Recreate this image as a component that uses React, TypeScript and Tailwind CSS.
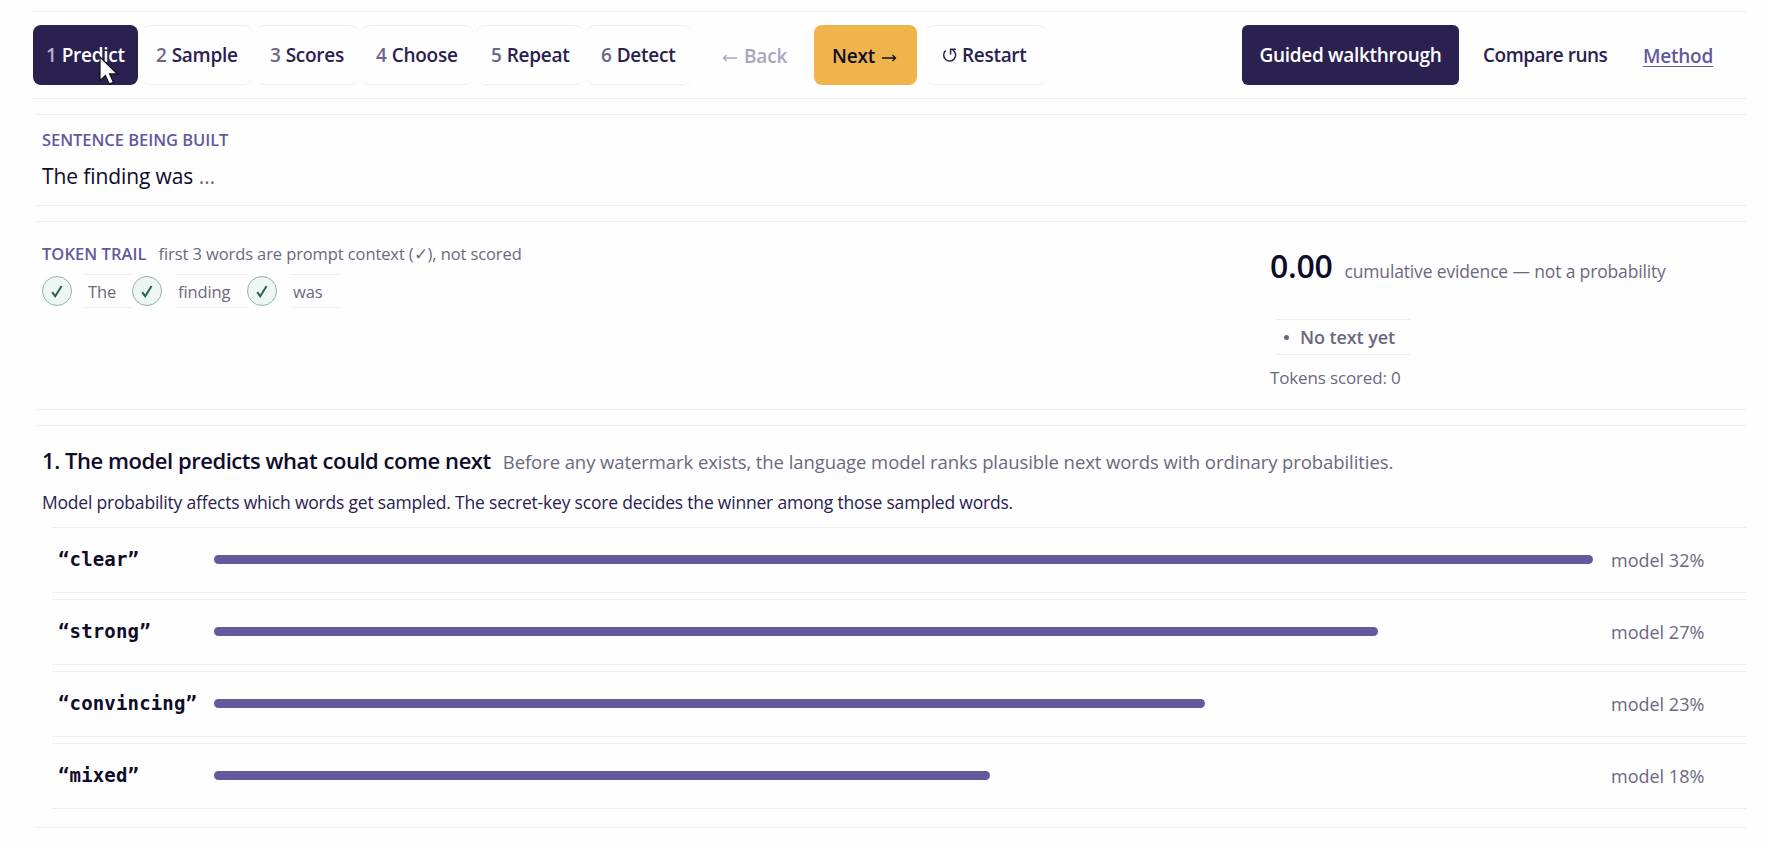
import React, { useState } from 'react';
import clsx from 'clsx';

const steps = [
  { label: 'Predict', width: 'w-[105px]' },
  { label: 'Sample', width: 'w-[110px]' },
  { label: 'Scores', width: 'w-[102px]' },
  { label: 'Choose', width: 'w-[111px]' },
  { label: 'Repeat', width: 'w-[106px]' },
  { label: 'Detect', width: 'w-[104px]' },
];

const trail = [
  { word: 'The', width: 'w-[47px]' },
  { word: 'finding', width: 'w-[72px]' },
  { word: 'was', width: 'w-[49px]' },
];

const candidates = [
  { word: 'clear', probability: 32 },
  { word: 'strong', probability: 27 },
  { word: 'convincing', probability: 23 },
  { word: 'mixed', probability: 18 },
];

const Cursor: React.FC = () => (
  <svg className="absolute left-[99px] top-[56px] z-10" width="20" height="29" viewBox="0 0 20 29">
    <path
      d="M1 1v23.5l5.4-5 3.9 8.5 4.1-1.8-3.8-8.3h7.6z"
      fill="#fff"
      stroke="#111"
      strokeWidth="1.2"
    />
  </svg>
);

const Arrow: React.FC<{ className?: string }> = ({ className }) => (
  <svg className={className} width="15" height="8" viewBox="0 0 15 8" fill="none" stroke="currentColor" strokeWidth="1.3">
    <path d="M0 4h13.5M10.5 1l3 3-3 3" />
  </svg>
);

const RestartIcon: React.FC = () => (
  <svg width="15" height="15" viewBox="0 0 15 15" fill="none" stroke="currentColor" strokeWidth="1.5">
    <path d="M3.6 2.6a6 6 0 1 0 7-.8M8.6 6.4V1.3h5.2" />
  </svg>
);

const Check: React.FC = () => (
  <svg width="12" height="13" viewBox="0 0 12 13" fill="none" stroke="currentColor" strokeWidth="2">
    <path d="M1.2 7.2l3 4L10.6 1" />
  </svg>
);

const App: React.FC = () => {
  const [activeStep, setActiveStep] = useState(0);
  const topProbability = candidates[0].probability;

  return (
    <div className="relative h-[848px] w-[1768px] overflow-hidden bg-[#fefefe] pt-[11px] font-['Open_Sans',sans-serif] text-[#0f0b2a]">
      <Cursor />

      {/* Toolbar */}
      <header className="ml-[33px] mr-[22px] flex h-[88px] items-start border-y border-[#eee] pt-[13px] text-[19px] font-semibold text-[#2a2150]">
        <nav className="flex gap-1">
          {steps.map((step, i) => (
            <button
              key={step.label}
              onClick={() => setActiveStep(i)}
              className={clsx(
                'flex h-[60px] items-center gap-[5px] whitespace-nowrap rounded-lg tracking-[-0.25px]',
                step.width,
                activeStep === i ? 'bg-[#2a2150] pl-[13px] text-white' : 'border-y border-[#eee] pl-[14px]'
              )}
            >
              <span className={activeStep === i ? 'text-[#b4aed0]' : 'text-[#6c6789]'}>{i + 1}</span>
              <span>{step.label}</span>
            </button>
          ))}
        </nav>

        <div className="ml-[16px] flex h-[60px] items-stretch">
          <button className="flex w-[107px] items-center gap-[7px] whitespace-nowrap pl-[15px] pt-[2px] tracking-[-0.2px] text-[#aaa5be]">
            <Arrow className="mt-1 rotate-180" /> Back
          </button>
          <button className="flex w-[103px] items-center gap-[7px] whitespace-nowrap rounded-lg bg-[#efb54c] pl-[18px] pt-[2px] tracking-[-0.2px] text-[#0f0b2a]">
            Next <Arrow className="mt-1" />
          </button>
          <button className="ml-[9px] flex w-[120px] items-center gap-[5px] whitespace-nowrap rounded-lg border-y border-[#eee] pl-[16px] pt-px tracking-[-0.3px]">
            <RestartIcon /> Restart
          </button>
        </div>

        <div className="ml-auto flex h-[60px] items-center pr-[33px]">
          <button className="h-[60px] w-[217px] whitespace-nowrap rounded-md bg-[#2a2150] tracking-[-0.3px] text-white">
            Guided walkthrough
          </button>
          <button className="ml-[24px] w-[160px] whitespace-nowrap text-left tracking-[-0.5px]">Compare runs</button>
          <a
            href="#method"
            className="mt-px w-[70px] whitespace-nowrap border-b border-[#625a9c] pt-px leading-[20px] tracking-[-0.25px] text-[#625a9c]"
          >
            Method
          </a>
        </div>
      </header>

      {/* Sentence */}
      <section className="ml-[35px] mr-[22px] mt-[15px] h-[92px] border-y border-[#eee] pl-[7px] pt-[13px]">
        <h2 className="text-[16.5px] font-semibold leading-6 tracking-[-0.05px] text-[#625a9c]">SENTENCE BEING BUILT</h2>
        <p className="mt-[8px] text-[21px] leading-8 tracking-[-0.1px]">
          The finding was <span className="text-[#6c6789]">…</span>
        </p>
      </section>

      {/* Token trail and running score */}
      <section className="ml-[35px] mr-[22px] mt-[15px] flex h-[189px] border-y border-[#eee] pl-[7px]">
        <div className="w-[1228px] pt-[20px]">
          <div className="flex items-baseline gap-3 leading-6">
            <h2 className="text-[16.5px] font-semibold tracking-[0.05px] text-[#625a9c]">TOKEN TRAIL</h2>
            <p className="text-[16.5px] tracking-[-0.1px] text-[#6c6880]">
              first 3 words are prompt context (✓), not scored
            </p>
          </div>
          <div className="mt-[8px] flex items-center">
            {trail.map((token) => (
              <div key={token.word} className="flex h-[34px] items-center">
                <span className="flex size-[30px] items-center justify-center rounded-full border border-[#92b3a9] bg-[#eef6f1] text-[#256257]">
                  <Check />
                </span>
                <span
                  className={clsx(
                    'ml-[13px] h-[34px] border-y border-[#eee] pl-[3px] text-[16.5px] leading-[33px] tracking-[-0.1px] text-[#6c6880]',
                    token.width
                  )}
                >
                  {token.word}
                </span>
              </div>
            ))}
          </div>
        </div>

        <div className="pt-[22px] text-[#6c6880]">
          <div className="flex items-baseline gap-3 leading-[44px]">
            <strong className="text-[32px] font-semibold tracking-[-0.3px] text-[#0f0b2a]">0.00</strong>
            <span className="text-[17.5px] tracking-[-0.15px]">cumulative evidence — not a probability</span>
          </div>
          <div className="ml-[6px] mt-[26px] flex h-[36px] w-[134px] items-center gap-[11px] border-y border-[#eee] pl-[8px] text-[18px] font-semibold tracking-[-0.1px]">
            <span className="size-[5px] rounded-full bg-[#6c6880]" />
            No text yet
          </div>
          <p className="mt-[11px] text-[17px] leading-6 tracking-[-0.15px]">Tokens scored: 0</p>
        </div>
      </section>

      {/* Step detail */}
      <section className="ml-[35px] mr-[22px] mt-[15px] h-[403px] border-y border-[#eee] pl-[7px] pt-[18px]">
        <div className="flex items-baseline gap-3 whitespace-nowrap leading-8">
          <h1 className="text-[22px] font-semibold tracking-[-0.45px]">1. The model predicts what could come next</h1>
          <p className="text-[18.5px] tracking-[-0.08px] text-[#6c6880]">
            Before any watermark exists, the language model ranks plausible next words with ordinary probabilities.
          </p>
        </div>
        <p className="mt-[12px] text-[17.5px] leading-6 tracking-[-0.2px] text-[#2a2150]">
          Model probability affects which words get sampled. The secret-key score decides the winner among those sampled
          words.
        </p>

        <ul className="ml-[10px] mt-[13px] flex flex-col gap-[6px]">
          {candidates.map((c) => (
            <li key={c.word} className="flex h-[66px] items-center border-y border-[#eee] pb-px pl-[6px]">
              <span className="w-[156px] whitespace-nowrap pb-px font-['DejaVu_Sans_Mono',monospace] text-[19px] font-bold leading-6 tracking-[0.15px]">
                “{c.word}”
              </span>
              <div className="w-[1379px]">
                <div
                  className="h-[9px] rounded-full bg-[#625a9c]"
                  style={{ width: `${(c.probability / topProbability) * 100}%` }}
                />
              </div>
              <span className="ml-[18px] whitespace-nowrap pt-[2px] text-[18px] text-[#6c6880]">
                model {c.probability}%
              </span>
            </li>
          ))}
        </ul>
      </section>
    </div>
  );
};

export default App;
